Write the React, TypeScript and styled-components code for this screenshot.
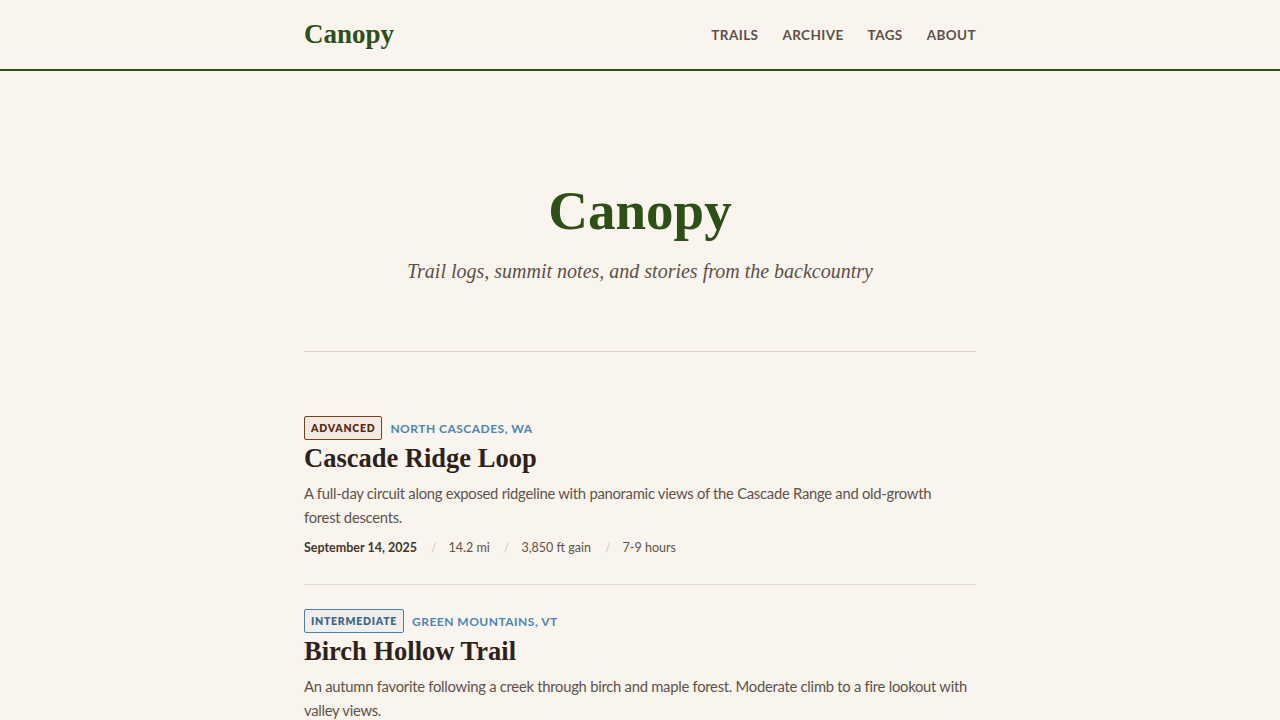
import styled, { createGlobalStyle } from 'styled-components'

const GlobalStyle = createGlobalStyle`
    body {
        margin: 0;
        background: #f9f4ee;
        font-family: Lato, "Liberation Sans", sans-serif;
        color: #3a2e24;
    }
`

interface Trail {
    level: 'advanced' | 'intermediate'
    location: string
    title: string
    summary: string
    date: string
    stats: string[]
}

const trails: Trail[] = [
    {
        level: 'advanced',
        location: 'North Cascades, WA',
        title: 'Cascade Ridge Loop',
        summary: 'A full-day circuit along exposed ridgeline with panoramic views of the Cascade Range and old-growth forest descents.',
        date: 'September 14, 2025',
        stats: ['14.2 mi', '3,850 ft gain', '7-9 hours'],
    },
    {
        level: 'intermediate',
        location: 'Green Mountains, VT',
        title: 'Birch Hollow Trail',
        summary: 'An autumn favorite following a creek through birch and maple forest. Moderate climb to a fire lookout with valley views.',
        date: 'October 2, 2025',
        stats: ['8.6 mi', '1,920 ft gain', '4-5 hours'],
    },
]

const App = () => {
    return <>
        <GlobalStyle />
        <Header>
            <HeaderInner>
                <Logo>Canopy</Logo>
                <Nav>
                    <NavLink>Trails</NavLink>
                    <NavLink>Archive</NavLink>
                    <NavLink>Tags</NavLink>
                    <NavLink>About</NavLink>
                </Nav>
            </HeaderInner>
        </Header>
        <Main>
            <Hero>
                <HeroTitle>Canopy</HeroTitle>
                <Tagline>Trail logs, summit notes, and stories from the backcountry</Tagline>
            </Hero>
            <PostList>
                {trails.map(t => (
                    <Post key={t.title}>
                        <Kicker>
                            <Badge $level={t.level}>{t.level}</Badge>
                            <Location>{t.location}</Location>
                        </Kicker>
                        <PostTitle>{t.title}</PostTitle>
                        <Summary>{t.summary}</Summary>
                        <Meta>
                            <MetaDate>{t.date}</MetaDate>
                            {t.stats.map(s => (
                                <MetaItem key={s}><Sep>/</Sep>{s}</MetaItem>
                            ))}
                        </Meta>
                    </Post>
                ))}
            </PostList>
        </Main>
    </>
}

export default App

const Header = styled.header`
    border-bottom: 2px solid #2d5016;
`
const HeaderInner = styled.div`
    width: 672px;
    margin: 0 auto;
    height: 69px;
    display: flex;
    align-items: center;
    justify-content: space-between;
`
const Logo = styled.div`
    font-family: "Liberation Serif", serif;
    font-weight: bold;
    font-size: 27px;
    color: #2d5016;
`
const Nav = styled.nav`
    display: flex;
    gap: 24px;
`
const NavLink = styled.a`
    font-size: 13.5px;
    font-weight: 700;
    letter-spacing: 0.03em;
    text-transform: uppercase;
    color: #5c5048;
`
const Main = styled.main`
    width: 672px;
    margin: 0 auto;
`
const Hero = styled.section`
    text-align: center;
    padding: 110px 0 68px;
    border-bottom: 1px solid #ddd5ca;
`
const HeroTitle = styled.h1`
    margin: 0;
    font-family: "Liberation Serif", serif;
    font-weight: bold;
    font-size: 55px;
    line-height: 60px;
    color: #2d5016;
`
const Tagline = styled.p`
    margin: 19px 0 0;
    font-family: "Liberation Serif", serif;
    font-style: italic;
    font-size: 20px;
    color: #5c5048;
`
const PostList = styled.div`
    padding-top: 40px;
`
const Post = styled.article`
    padding: 24px 0 29px;
    border-bottom: 1px solid #e6ddd2;
`
const Kicker = styled.div`
    display: flex;
    align-items: center;
    gap: 8px;
`
const Badge = styled.span<{ $level: 'advanced' | 'intermediate' }>`
    font-size: 10.5px;
    font-weight: 800;
    letter-spacing: 0.07em;
    text-transform: uppercase;
    padding: 0 6px;
    height: 22px;
    line-height: 22px;
    border-radius: 2px;
    border: 1px solid ${p => p.$level === 'advanced' ? '#7a3e1e' : '#4a80aa'};
    color: ${p => p.$level === 'advanced' ? '#5c2e14' : '#3d6888'};
    background: ${p => p.$level === 'advanced' ? '#f3ebe2' : '#f0efec'};
`
const Location = styled.span`
    font-size: 12px;
    font-weight: 700;
    letter-spacing: 0.04em;
    text-transform: uppercase;
    color: #4a86b4;
`
const PostTitle = styled.h2`
    margin: 1px 0 0;
    font-family: "Liberation Serif", serif;
    font-weight: bold;
    font-size: 26.5px;
    line-height: 34px;
    color: #2e2218;
`
const Summary = styled.p`
    margin: 6px 0 0;
    max-width: 665px;
    font-size: 14.8px;
    line-height: 24px;
    letter-spacing: -0.018em;
    color: #5e5349;
`
const Meta = styled.div`
    margin-top: 11px;
    display: flex;
    align-items: center;
    font-size: 12.5px;
    color: #5e5349;
`
const MetaDate = styled.span`
    font-weight: 700;
    color: #44362a;
`
const MetaItem = styled.span``
const Sep = styled.span`
    color: #cfc6bb;
    margin: 0 12px 0 14px;
`
